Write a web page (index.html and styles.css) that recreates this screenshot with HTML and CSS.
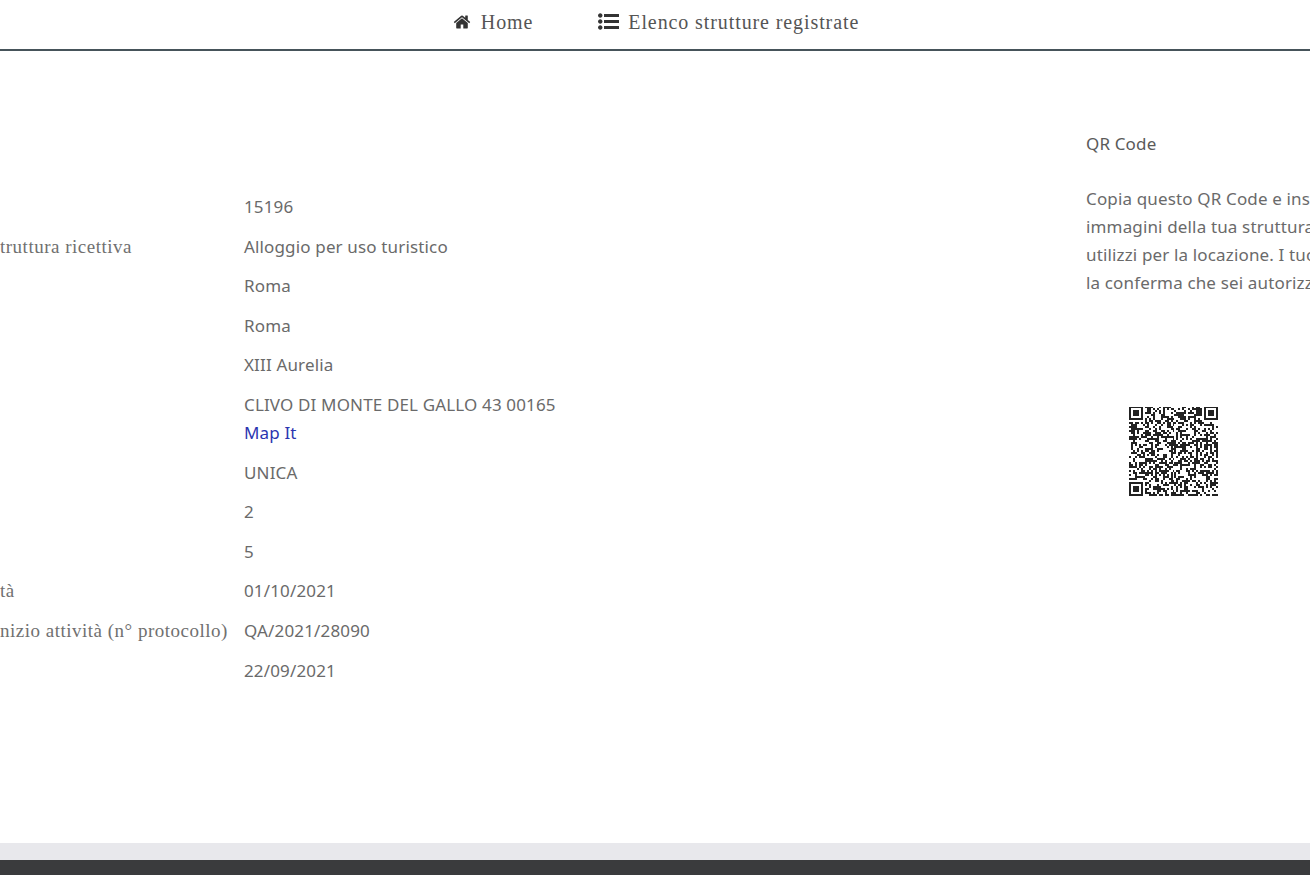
FILE: index.html
```html
<!DOCTYPE html>
<html lang="it">
<head>
<meta charset="utf-8">
<title>Struttura ricettiva</title>
<link rel="stylesheet" href="styles.css">
</head>
<body>
<nav class="nav">
  <a class="nav-link nav-home" href="#">
    <svg class="icon-home" viewBox="0 0 1792 1792"><path d="M1472 992v480q0 26-19 45t-45 19h-384v-384h-256v384h-384q-26 0-45-19t-19-45v-480q0-1 .5-3t.5-3l575-474 575 474q1 2 1 6zm223-69l-62 74q-8 9-21 11h-3q-13 0-21-7l-692-577-692 577q-12 8-24 7-13-2-21-11l-62-74q-8-10-7-23.5t11-21.5l719-599q32-26 76-26t76 26l244 204v-195q0-14 9-23t23-9h192q14 0 23 9t9 23v408l219 182q10 8 11 21.5t-7 23.5z"/></svg>
    Home
  </a>
  <a class="nav-link" href="#">
    <svg class="icon-list" viewBox="0 0 1792 1792"><path d="M384 1408q0 80-56 136t-136 56-136-56-56-136 56-136 136-56 136 56 56 136zm0-512q0 80-56 136t-136 56-136-56-56-136 56-136 136-56 136 56 56 136zm1408 416v192q0 13-9.500 22.500t-22.500 9.500h-1216q-13 0-22.500-9.500t-9.500-22.500v-192q0-13 9.500-22.500t22.500-9.500h1216q13 0 22.500 9.500t9.500 22.500zm-1408-928q0 80-56 136t-136 56-136-56-56-136 56-136 136-56 136 56 56 136zm1408 416v192q0 13-9.500 22.500t-22.500 9.500h-1216q-13 0-22.500-9.500t-9.500-22.500v-192q0-13 9.500-22.500t22.500-9.500h1216q13 0 22.500 9.500t9.500 22.500zm0-512v192q0 13-9.500 22.500t-22.500 9.500h-1216q-13 0-22.500-9.500t-9.500-22.500v-192q0-13 9.500-22.500t22.500-9.500h1216q13 0 22.500 9.500t9.500 22.500z"/></svg>
    Elenco strutture registrate
  </a>
</nav>
<main class="main">
  <section class="details">
    <div class="label"></div><div class="value">15196</div>
    <div class="label">truttura ricettiva</div><div class="value">Alloggio per uso turistico</div>
    <div class="label"></div><div class="value">Roma</div>
    <div class="label"></div><div class="value">Roma</div>
    <div class="label"></div><div class="value">XIII Aurelia</div>
    <div class="label"></div><div class="value">CLIVO DI MONTE DEL GALLO 43 00165<br><a class="map" href="#">Map It</a></div>
    <div class="label"></div><div class="value">UNICA</div>
    <div class="label"></div><div class="value">2</div>
    <div class="label"></div><div class="value">5</div>
    <div class="label">tà</div><div class="value">01/10/2021</div>
    <div class="label">nizio attività (n° protocollo)</div><div class="value">QA/2021/28090</div>
    <div class="label"></div><div class="value">22/09/2021</div>
  </section>
  <aside class="qr">
    <h2 class="qr-title">QR Code</h2>
    <p class="qr-text">Copia questo QR Code e inserisci<br>immagini della tua struttura<br>utilizzi per la locazione. I tuoi<br>la conferma che sei autorizzato</p>
    <svg class="qr-code" id="qr" viewBox="0 0 45 45" shape-rendering="crispEdges"><path id="qr-path"/></svg>
  </aside>
</main>
<div class="band"></div>
<footer class="footer"></footer>
<script src="qr.js"></script>
</body>
</html>
```

FILE: styles.css
```css
html, body {
  margin: 0;
  height: 100%;
  overflow: hidden;
  background: #fff;
}
body {
  display: flex;
  flex-direction: column;
  color: #6a6a6a;
  font-family: "Noto Sans", "Lato", sans-serif;
  font-size: 17px;
  letter-spacing: 0.15px;
  line-height: 28px;
}
.nav {
  flex: none;
  height: 43px;
  display: flex;
  justify-content: center;
  align-items: center;
  gap: 65px;
  padding: 0 0 6px 2px;
  border-bottom: 2px solid #46535a;
}
.nav-link {
  display: flex;
  align-items: center;
  gap: 9px;
  color: #555;
  text-decoration: none;
  font-family: "Liberation Serif", serif;
  font-size: 20px;
  letter-spacing: 0.9px;
}
.nav-home { gap: 10px; }
.icon-home { width: 18px; height: 18px; fill: #333; }
.icon-list { width: 21px; height: 21px; fill: #333; }
.main {
  flex: 1;
  display: grid;
  grid-template-columns: 1086px 1fr;
  min-height: 0;
}
.details {
  display: grid;
  grid-template-columns: 244px 1fr;
  align-content: start;
  row-gap: 11.6px;
  padding-top: 142px;
}
.label {
  font-family: "Liberation Serif", serif;
  font-size: 19px;
  letter-spacing: 0.5px;
  white-space: nowrap;
  color: #707070;
}
.value { white-space: nowrap; }
.map { color: #2b35b0; text-decoration: none; }
.qr { padding-top: 79px; width: 400px; }
.qr-title {
  margin: 0 0 27px;
  font-size: 17px;
  font-weight: 400;
  color: #5a5a5a;
}
.qr-text { margin: 0; white-space: nowrap; }
.qr-code {
  display: block;
  width: 89px;
  height: 90px;
  margin: 109px 0 0 43px;
}
.qr-code path { fill: #222; }
.band { flex: none; height: 17px; background: #e8e8ec; }
.footer { flex: none; height: 15px; background: #3a3b3d; }
```

FILE: qr.js
```js
// Draws a QR-style module matrix: three finder squares and seeded noise.
(function () {
  var size = 45, seed = 15196, d = "";
  function next() {
    seed = (seed * 1103515245 + 12345) & 0x7fffffff;
    return (seed >> 16) & 1;
  }
  function finder(x, y) {
    return "M" + x + " " + y + "h7v7h-7zM" + (x + 1) + " " + (y + 1) + "v5h5v-5zM" + (x + 2) + " " + (y + 2) + "h3v3h-3z";
  }
  function inFinder(x, y) {
    return (x < 8 && y < 8) || (x > 36 && y < 8) || (x < 8 && y > 36);
  }
  for (var y = 0; y < size; y++) {
    for (var x = 0; x < size; x++) {
      if (next() && !inFinder(x, y)) d += "M" + x + " " + y + "h1v1h-1z";
    }
  }
  d += finder(0, 0) + finder(38, 0) + finder(0, 38);
  var path = document.getElementById("qr-path");
  path.setAttribute("d", d);
  path.setAttribute("fill-rule", "evenodd");
})();
```
